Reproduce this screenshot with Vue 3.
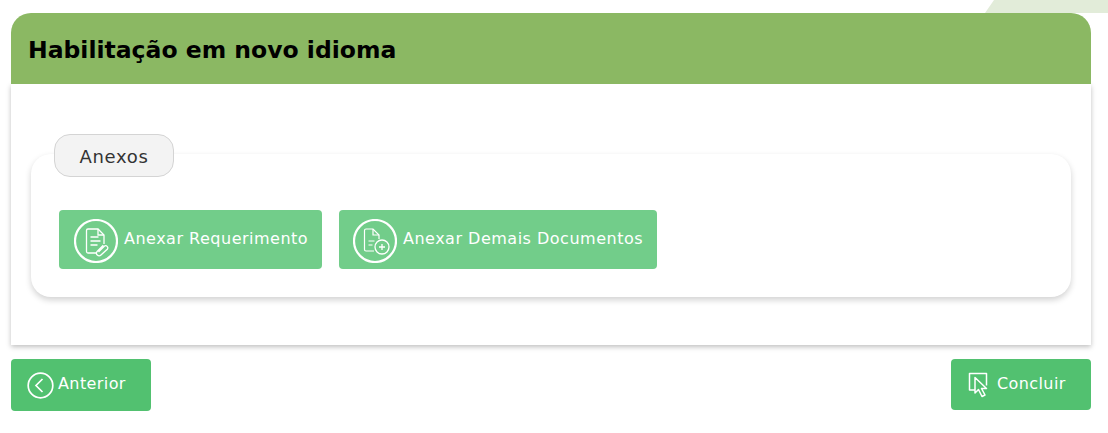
<script setup>
</script>

<template>
  <div class="page">
    <svg class="corner" width="123" height="13" viewBox="0 0 123 13"><polygon points="9,0 123,0 123,13 0,13" fill="#e2ecd9"/></svg>
    <section class="card">
      <header class="head"><h1>Habilitação em novo idioma</h1></header>
      <div class="body">
        <div class="box">
          <div class="legend">Anexos</div>
          <div class="actions">
            <button class="btn light first">
              <span class="ring">
                <svg width="44" height="44" viewBox="0 0 44 44" fill="none" stroke="#fff">
                  <circle cx="22" cy="22" r="21" stroke-width="2.2"/>
                  <path d="M30 25V16l-6-6H14a1.500 1.500 0 0 0-1.500 1.500v21A1.500 1.500 0 0 0 14 34h9" stroke-width="1.300"/>
                  <path d="M24 10v6h6M16.500 18h8M16.500 22h10M16.500 26h7" stroke-width="1.300"/>
                  <path d="M24.500 33l6-6a2.200 2.200 0 0 1 3 3l-6.500 6a2.600 2.600 0 0 1-3.700-3.700l6-6" stroke-width="1.300"/>
                </svg>
              </span>
              <span class="label">Anexar Requerimento</span>
            </button>
            <button class="btn light second">
              <span class="ring">
                <svg width="44" height="44" viewBox="0 0 44 44" fill="none" stroke="#fff">
                  <circle cx="22" cy="22" r="21" stroke-width="2.2"/>
                  <path d="M26 20v-4l-6-6h-7a1.500 1.500 0 0 0-1.500 1.500v19A1.500 1.500 0 0 0 13 32h8" stroke-width="1.200"/>
                  <path d="M20 10v6h6M15.500 22h6M15.500 26h4" stroke-width="1.200"/>
                  <circle cx="29" cy="28" r="7" stroke-width="1.300"/>
                  <path d="M26 28h6M29 25v6" stroke-width="1.300"/>
                </svg>
              </span>
              <span class="label">Anexar Demais Documentos</span>
            </button>
          </div>
        </div>
      </div>
    </section>
    <footer class="foot">
      <button class="btn solid prev">
        <svg width="27" height="27" viewBox="0 0 27 27" fill="none" stroke="#fff" stroke-width="1.700">
          <circle cx="13.500" cy="13.500" r="12.300"/>
          <path d="M15.500 7l-6.500 6.500 6.500 6.500"/>
        </svg>
        <span class="label">Anterior</span>
      </button>
      <button class="btn solid next">
        <svg width="24" height="26" viewBox="0 0 24 26" fill="none" stroke="#fff" stroke-width="1.500" stroke-linejoin="round">
          <path d="M7 18H1.500V1.500h17v12"/>
          <path d="M7 5.500l0 15.500 3.500-3.500 3.500 7 3-1.500-3.500-6.500h5z"/>
        </svg>
        <span class="label">Concluir</span>
      </button>
    </footer>
  </div>
</template>

<style scoped>
.page {
  position: relative;
  width: 1108px;
  height: 433px;
  box-sizing: border-box;
  padding: 13px 17px 0 11px;
  background: #fff;
  overflow: hidden;
  font-family: "DejaVu Sans", sans-serif;
}
.corner {
  position: absolute;
  top: 0;
  right: 0;
}
.card {
  position: relative;
}
.head {
  position: relative;
  z-index: 1;
  height: 71px;
  display: flex;
  align-items: center;
  padding-left: 18px;
  background: #8bb863;
  border-radius: 20px 20px 0 0;
}
h1 {
  margin: 3px 0 0 -1px;
  font-size: 23.500px;
  font-weight: 700;
  color: #000;
}
.body {
  padding: 70px 20px 48px;
  background: #fff;
  box-shadow: 0 2px 5px rgba(0, 0, 0, 0.25);
}
.box {
  height: 143px;
  box-sizing: border-box;
  padding: 0 28px;
  background: #fff;
  border-radius: 20px;
  box-shadow: 0 3px 6px rgba(0, 0, 0, 0.18);
}
.legend {
  position: relative;
  top: -20px;
  left: -5px;
  width: 120px;
  height: 43px;
  box-sizing: border-box;
  border: 1px solid #d4d4d4;
  border-radius: 16px;
  background: #f3f3f3;
  color: #333;
  font-size: 18px;
  letter-spacing: 0.7px;
  line-height: 43px;
  text-align: center;
}
.actions {
  display: flex;
  gap: 17px;
  margin-top: 13px;
}
.btn {
  display: flex;
  align-items: center;
  border: 0;
  border-radius: 4px;
  color: #fff;
  font-family: inherit;
  font-weight: 500;
  padding: 0;
}
.light {
  height: 59px;
  background: #72cd8a;
  font-size: 16px;
  letter-spacing: 0.5px;
}
.first {
  width: 263px;
  padding-left: 15px;
  gap: 6px;
}
.second {
  width: 318px;
  padding-left: 14px;
  gap: 6px;
}
.ring {
  display: flex;
  margin-top: 3px;
}
.label {
  padding-bottom: 3px;
}
.foot {
  display: flex;
  justify-content: space-between;
  align-items: flex-start;
  margin-top: 14px;
}
.solid {
  width: 140px;
  background: #52c170;
  font-size: 16px;
  letter-spacing: 0.4px;
}
.prev {
  height: 52px;
  padding-left: 16px;
  gap: 4px;
}
.next {
  height: 51px;
  padding-left: 17px;
  gap: 5px;
}
</style>
